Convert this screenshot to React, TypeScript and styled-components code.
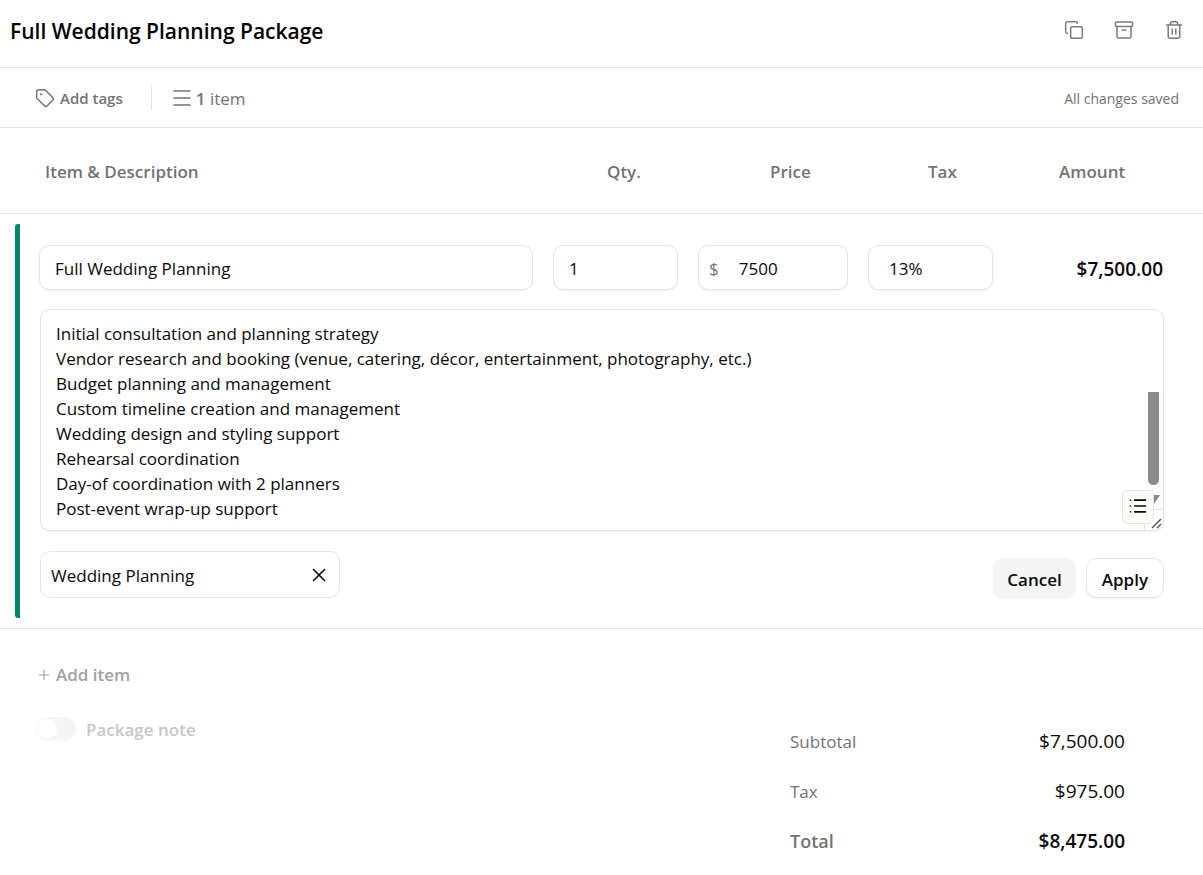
import React from "react";
import styled, { createGlobalStyle } from "styled-components";
import { Copy, List, Menu, Plus, Tag, X } from "lucide-react";

const line = "#e5e5e5";
const muted = "#737373";
const ink = "#0a0a0a";

const GlobalStyle = createGlobalStyle`
  *, *::before, *::after { box-sizing: border-box; }
  body {
    margin: 0;
    background: #fff;
    color: ${ink};
    font-family: "Open Sans", "Noto Sans", sans-serif;
    font-size: 17px;
    line-height: 25px;
  }
  button, input, textarea { font: inherit; color: inherit; }
  button { padding: 0; border: 0; background: none; cursor: pointer; }
  h1, p { margin: 0; }
`;

const Page = styled.main`
  width: 100%;
`;

const Header = styled.header`
  display: flex;
  align-items: center;
  justify-content: space-between;
  height: 68px;
  padding: 0 18px 6px 10px;
  border-bottom: 1px solid ${line};
`;

const Title = styled.h1`
  font-size: 21px;
  font-weight: 600;
  line-height: 30px;
  color: #000;
`;

const HeaderActions = styled.div`
  display: flex;
  gap: 28px;
  padding-bottom: 2px;
`;

const IconButton = styled.button`
  display: grid;
  place-items: center;
  width: 22px;
  height: 22px;
  color: #7c7c7c;
`;

const MetaBar = styled.div`
  display: flex;
  align-items: center;
  height: 60px;
  padding: 0 24px 0 35px;
  border-bottom: 1px solid ${line};
  color: ${muted};
`;

const TextLabel = styled.span`
  padding-top: 2px;
`;

const TagsButton = styled.button`
  display: flex;
  align-items: center;
  gap: 5px;
  font-size: 15px;
  font-weight: 600;
`;

const Divider = styled.span`
  width: 1px;
  height: 25px;
  margin: 0 18px 0 28px;
  background: ${line};
`;

const ItemCount = styled.p`
  display: flex;
  align-items: center;
  gap: 2px;

  b { font-weight: 600; }
`;

const SaveStatus = styled.p`
  margin-left: auto;
  padding-top: 2px;
  font-size: 14px;
`;

const ItemsTable = styled.table`
  display: block;
  border-bottom: 1px solid ${line};
`;

const TableHead = styled.thead`
  display: block;
  border-bottom: 1px solid ${line};
`;

const HeadRow = styled.tr`
  display: grid;
  grid-template-columns: minmax(0, 1fr) 125px 150px 125px 150px;
  gap: 20px;
  align-items: center;
  height: 85px;
  padding: 2px 40px 0 39px;
`;

const HeadCell = styled.th<{ $indent: number }>`
  padding: 0 0 0 ${(p) => p.$indent}px;
  color: ${muted};
  font-weight: 600;
  text-align: left;
`;

const TableBody = styled.tbody`
  display: block;
  margin: 10px 0 10px 15px;
  padding: 21px 0 20px;
  border-left: 5px solid #008768;
  border-radius: 3px 0 0 3px;
`;

const FieldsRow = styled.tr`
  display: grid;
  grid-template-columns: minmax(0, 1fr) 125px 150px 125px 150px;
  gap: 20px;
  align-items: center;
  padding: 0 40px 0 19px;
`;

const WideRow = styled.tr<{ $gap: number }>`
  display: block;
  padding: ${(p) => p.$gap}px 39px 0 20px;
`;

const Cell = styled.td`
  display: block;
  padding: 0;
`;

const FieldBox = styled.label`
  display: flex;
  align-items: center;
  height: 45px;
  border: 1px solid ${line};
  border-radius: 10px;
  background: #fff;
  box-shadow: 0 1px 2px rgba(0, 0, 0, 0.05);
`;

const FieldInput = styled.input<{ $indent: number }>`
  width: 100%;
  min-width: 0;
  height: 43px;
  padding: 2px 10px 0 ${(p) => p.$indent}px;
  border: 0;
  border-radius: 10px;
  background: transparent;
  outline: none;
`;

const Currency = styled.span`
  padding: 2px 0 0 10px;
  color: ${muted};
`;

const Amount = styled(Cell)`
  padding-top: 4px;
  font-size: 19px;
  font-weight: 600;
  text-align: right;
`;

const DescriptionWrap = styled.div`
  position: relative;
  display: flex;
`;

const Description = styled.textarea`
  width: 100%;
  height: 222px;
  padding: 11px 40px 8px 15px;
  border: 1px solid ${line};
  border-radius: 10px;
  background: #fff;
  box-shadow: 0 1px 2px rgba(0, 0, 0, 0.05);
  line-height: 25px;
  overflow: hidden;
  resize: none;
  outline: none;
`;

const ScrollRail = styled.div`
  position: absolute;
  right: 1px;
  bottom: 1px;
  width: 19px;
  height: 138px;
  border-radius: 0 0 9px 0;
  overflow: hidden;
`;

const ListButton = styled.button`
  position: absolute;
  right: 10px;
  bottom: 7px;
  display: grid;
  place-items: center;
  width: 32px;
  height: 34px;
  padding-bottom: 2px;
  border: 1px solid ${line};
  border-radius: 5px;
  background: #fafdf5;
`;

const ActionsBar = styled.div`
  display: flex;
  align-items: center;
  justify-content: space-between;
`;

const CategoryBox = styled.div`
  display: flex;
  align-items: center;
  justify-content: space-between;
  width: 300px;
  height: 47px;
  padding: 0 9px 0 10px;
  border: 1px solid ${line};
  border-radius: 10px;
`;

const ClearButton = styled.button`
  display: grid;
  place-items: center;
`;

const Buttons = styled.div`
  display: flex;
  gap: 10px;
  padding-top: 7px;
`;

const ActionButton = styled.button<{ $outlined?: boolean }>`
  height: 40px;
  padding: 2px ${(p) => (p.$outlined ? 15 : 13)}px 0;
  border: 1px solid ${(p) => (p.$outlined ? line : "#f5f5f5")};
  border-radius: 10px;
  background: ${(p) => (p.$outlined ? "#fff" : "#f5f5f5")};
  box-shadow: 0 1px 2px rgba(0, 0, 0, 0.05);
  font-weight: 600;
`;

const Footer = styled.section`
  padding: 33px 78px 8px 36px;
`;

const AddButton = styled.button`
  display: flex;
  align-items: center;
  gap: 4px;
  color: #a1a1a1;
  font-weight: 600;
`;

const FooterColumns = styled.div`
  display: flex;
  align-items: flex-start;
  justify-content: space-between;
  padding-top: 28px;
`;

const NoteToggle = styled.label`
  display: flex;
  align-items: center;
  gap: 10px;
  color: #c7c7c7;
  font-weight: 600;
`;

const Switch = styled.input`
  appearance: none;
  display: flex;
  align-items: center;
  width: 40px;
  height: 23px;
  margin: 0;
  padding: 0 1px;
  border-radius: 12px;
  background: #f5f5f5;
  box-shadow: 0 1px 2px rgba(0, 0, 0, 0.03);

  &::before {
    content: "";
    width: 20px;
    height: 20px;
    border-radius: 50%;
    background: #fff;
  }
  &:checked { justify-content: flex-end; background: #008768; }
`;

const Totals = styled.table`
  width: 335px;
  margin-top: 1px;
  border-collapse: collapse;
`;

const TotalLabel = styled.th<{ $strong?: boolean }>`
  height: 50px;
  padding: 0;
  color: ${muted};
  font-weight: ${(p) => (p.$strong ? 600 : 400)};
  font-size: ${(p) => (p.$strong ? 18 : 17)}px;
  text-align: left;
`;

const TotalValue = styled.td<{ $strong?: boolean }>`
  padding: 1px 0 0;
  font-size: 19px;
  font-weight: ${(p) => (p.$strong ? 600 : 400)};
  text-align: right;
`;

const glyph = {
  width: 20,
  height: 20,
  viewBox: "0 0 20 20",
  fill: "none",
  stroke: "currentColor",
  strokeWidth: 1.5,
  strokeLinecap: "round",
  strokeLinejoin: "round",
  "aria-hidden": true,
} as const;

const ArchiveIcon = () => (
  <svg {...glyph}>
    <rect x="1.500" y="2" width="17" height="4.500" rx="1" />
    <path d="M3 6.500v9.500a2 2 0 0 0 2 2h10a2 2 0 0 0 2-2V6.500M8 10h4" />
  </svg>
);

const TrashIcon = () => (
  <svg {...glyph}>
    <path d="M2.500 5h15M6.500 5V3.500A1.800 1.800 0 0 1 8.300 1.700h3.400a1.800 1.800 0 0 1 1.800 1.800V5" />
    <path d="M4.200 5v11.300a2 2 0 0 0 2 2h7.600a2 2 0 0 0 2-2V5M8.200 9v5M11.800 9v5" />
  </svg>
);

const details = [
  "Initial consultation and planning strategy",
  "Vendor research and booking (venue, catering, décor, entertainment, photography, etc.)",
  "Budget planning and management",
  "Custom timeline creation and management",
  "Wedding design and styling support",
  "Rehearsal coordination",
  "Day-of coordination with 2 planners",
  "Post-event wrap-up support",
].join("\n");

const columns = [
  { label: "Item & Description", indent: 6 },
  { label: "Qty.", indent: 54 },
  { label: "Price", indent: 72 },
  { label: "Tax", indent: 60 },
  { label: "Amount", indent: 46 },
];

const totals = [
  { label: "Subtotal", value: "$7,500.00" },
  { label: "Tax", value: "$975.00" },
  { label: "Total", value: "$8,475.00", strong: true },
];

export default function App() {
  return (
    <Page>
      <GlobalStyle />
      <Header>
        <Title>Full Wedding Planning Package</Title>
        <HeaderActions>
          <IconButton aria-label="Duplicate"><Copy size={20} strokeWidth={1.8} /></IconButton>
          <IconButton aria-label="Archive"><ArchiveIcon /></IconButton>
          <IconButton aria-label="Delete"><TrashIcon /></IconButton>
        </HeaderActions>
      </Header>

      <MetaBar>
        <TagsButton><Tag size={20} strokeWidth={1.7} /><TextLabel>Add tags</TextLabel></TagsButton>
        <Divider />
        <ItemCount><Menu size={24} strokeWidth={1.4} /><TextLabel><b>1</b> item</TextLabel></ItemCount>
        <SaveStatus>All changes saved</SaveStatus>
      </MetaBar>

      <ItemsTable>
        <TableHead>
          <HeadRow>
            {columns.map((c) => (
              <HeadCell key={c.label} $indent={c.indent} scope="col">{c.label}</HeadCell>
            ))}
          </HeadRow>
        </TableHead>
        <TableBody>
          <FieldsRow>
            <Cell><FieldBox><FieldInput $indent={15} aria-label="Item name" defaultValue="Full Wedding Planning" /></FieldBox></Cell>
            <Cell><FieldBox><FieldInput $indent={15} aria-label="Quantity" defaultValue="1" /></FieldBox></Cell>
            <Cell><FieldBox><Currency>$</Currency><FieldInput $indent={20} aria-label="Price" defaultValue="7500" /></FieldBox></Cell>
            <Cell><FieldBox><FieldInput $indent={20} aria-label="Tax rate" defaultValue="13%" /></FieldBox></Cell>
            <Amount>$7,500.00</Amount>
          </FieldsRow>
          <WideRow $gap={19}>
            <Cell colSpan={5}>
              <DescriptionWrap>
                <Description aria-label="Description" defaultValue={details} />
                <ScrollRail>
                  <svg width="19" height="138" viewBox="0 0 19 138" aria-hidden="true">
                    <rect width="19" height="117" fill="#fcfcfc" />
                    <path d="M4 0h11v87.500a5.500 5.500 0 0 1-11 0z" fill="#8b8b8b" />
                    <path d="M4 103h12l-6 9z" fill="#8b8b8b" />
                    <path d="M0 117.500h19M.5 117v21" stroke="#e5e5e5" fill="none" />
                    <path d="M8 136l9-9M13 136l4-4" stroke="#555" strokeWidth="1.500" />
                  </svg>
                </ScrollRail>
                <ListButton aria-label="Insert list"><List size={20} strokeWidth={2} /></ListButton>
              </DescriptionWrap>
            </Cell>
          </WideRow>
          <WideRow $gap={20}>
            <Cell colSpan={5}>
              <ActionsBar>
                <CategoryBox>
                  <TextLabel>Wedding Planning</TextLabel>
                  <ClearButton aria-label="Clear category"><X size={22} strokeWidth={1.7} /></ClearButton>
                </CategoryBox>
                <Buttons>
                  <ActionButton>Cancel</ActionButton>
                  <ActionButton $outlined>Apply</ActionButton>
                </Buttons>
              </ActionsBar>
            </Cell>
          </WideRow>
        </TableBody>
      </ItemsTable>

      <Footer>
        <AddButton><Plus size={16} strokeWidth={1.7} />Add item</AddButton>
        <FooterColumns>
          <NoteToggle><Switch type="checkbox" role="switch" /><TextLabel>Package note</TextLabel></NoteToggle>
          <Totals>
            <tbody>
              {totals.map((t) => (
                <tr key={t.label}>
                  <TotalLabel scope="row" $strong={t.strong}>{t.label}</TotalLabel>
                  <TotalValue $strong={t.strong}>{t.value}</TotalValue>
                </tr>
              ))}
            </tbody>
          </Totals>
        </FooterColumns>
      </Footer>
    </Page>
  );
}
